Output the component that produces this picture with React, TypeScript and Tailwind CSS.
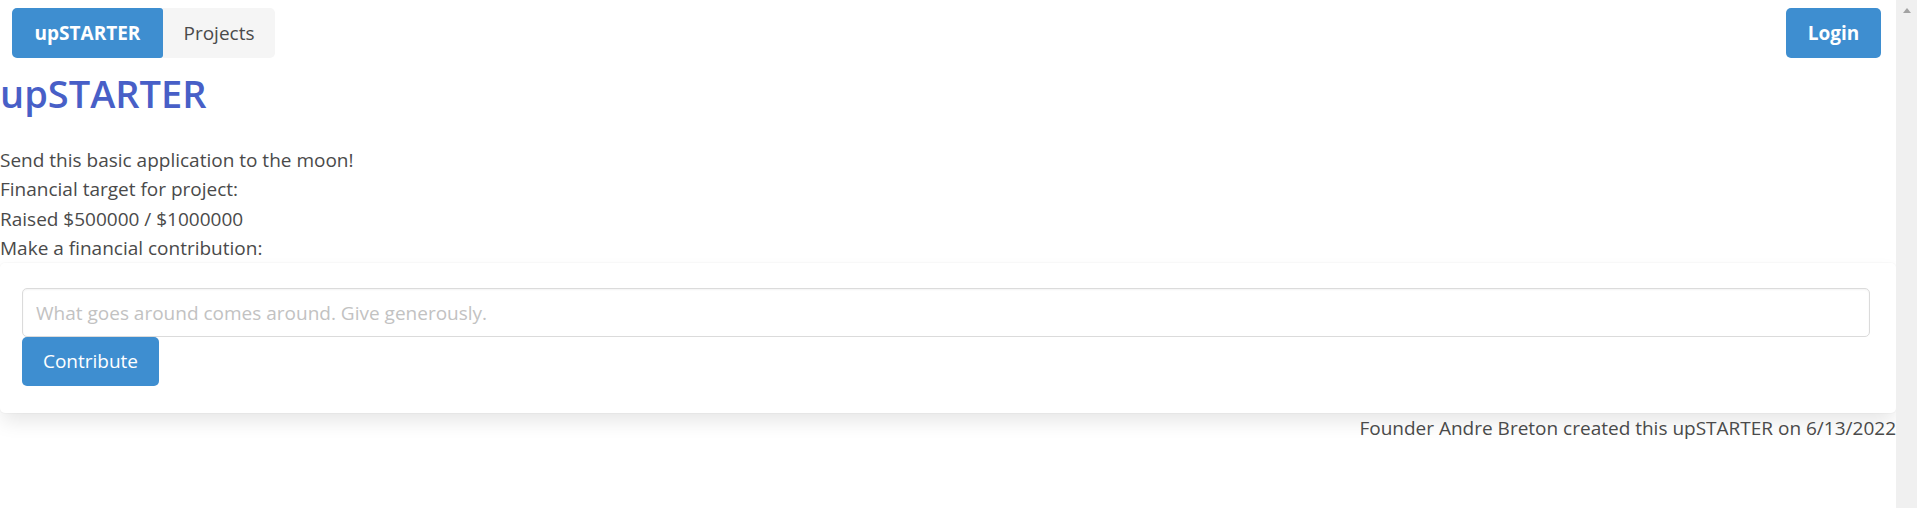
const font = { fontFamily: '"Open Sans", "Noto Sans", sans-serif' };

function Scrollbar() {
    return (
        <div className="w-[21px] shrink-0 bg-[#f0f0f0] flex justify-center pt-[8px]">
            <div className="w-0 h-0 border-l-[4px] border-r-[4px] border-b-[5px] border-l-transparent border-r-transparent border-b-[#a3a3a3]" />
        </div>
    );
}

export default function App() {
    return (
        <div className="flex h-[508px] overflow-hidden bg-white text-[#4a4a4a]" style={font}>
            <main className="flex-1 min-w-0">
                <nav className="flex justify-between items-center pt-[8px] pl-[12px] pr-[15px]">
                    <div className="flex">
                        <button className="w-[151px] h-[50px] bg-[#3e8ed0] text-white font-bold text-[19px] rounded-l-[5px] rounded-r-[3px]">
                            upSTARTER
                        </button>
                        <button className="w-[112px] h-[50px] bg-[#f5f5f5] text-[#4a4a4a] text-[19px] rounded-r-[5px]">
                            Projects
                        </button>
                    </div>
                    <button className="w-[95px] h-[50px] bg-[#3e8ed0] text-white font-bold text-[19px] rounded-[5px]">
                        Login
                    </button>
                </nav>

                <h1 className="mt-[13px] text-[38px] leading-[45px] font-semibold text-[#485fc7]">
                    upSTARTER
                </h1>

                <div className="mt-[30px] text-[19px] leading-[29.3px]">
                    <p>Send this basic application to the moon!</p>
                    <p>Financial target for project:</p>
                    <p>Raised $500000 / $1000000</p>
                    <p>Make a financial contribution:</p>
                </div>

                <div className="h-[150px] pt-[25px] pl-[22px] pr-[26px] bg-white rounded-[5px] shadow-[0_10px_20px_-2.5px_rgba(10,10,10,0.1),0_0_0_1px_rgba(10,10,10,0.02)]">
                    <input
                        className="block w-full h-[49px] px-[13px] border border-[#dbdbdb] rounded-[5px] text-[19px] text-[#363636] placeholder:text-[#c2c2c2] outline-none shadow-[inset_0_1px_2px_rgba(10,10,10,0.05)]"
                        placeholder="What goes around comes around. Give generously."
                    />
                    <button className="w-[137px] h-[49px] bg-[#3e8ed0] text-white text-[19px] rounded-[5px]">
                        Contribute
                    </button>
                </div>

                <p className="text-right text-[19px] leading-[30px]">
                    Founder Andre Breton created this upSTARTER on 6/13/2022
                </p>
            </main>
            <Scrollbar />
        </div>
    );
}
